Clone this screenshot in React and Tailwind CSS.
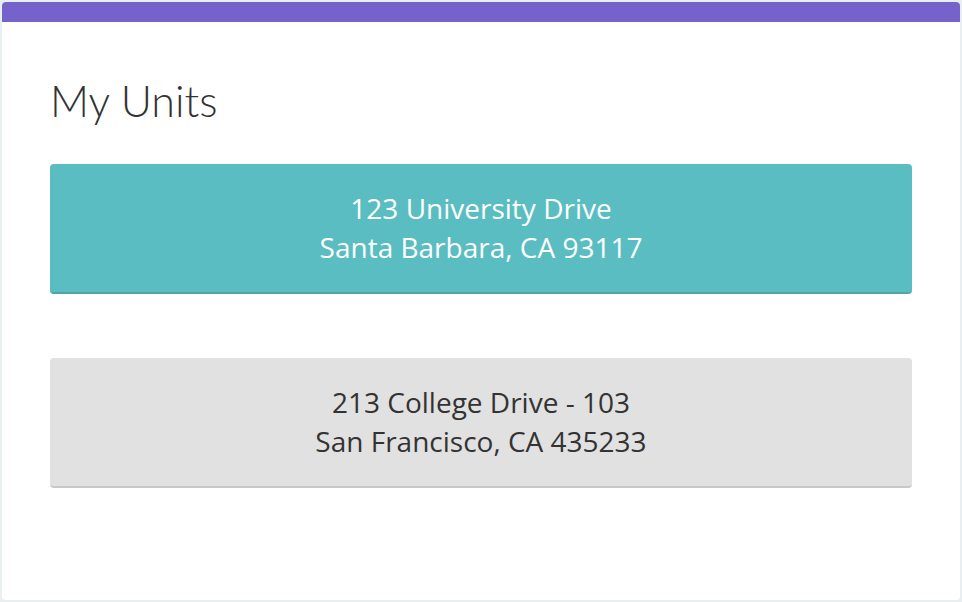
export default function App() {
  const font = { fontFamily: "'Open Sans', Lato, sans-serif" };
  const titleFont = { fontFamily: "Lato, 'Open Sans', sans-serif" };
  return (
    <div className="w-[962px] h-[602px] bg-[#e9eef1] p-[2px] box-border" style={font}>
      <div className="h-full w-[958px] bg-white rounded-[4px] overflow-hidden flex flex-col">
        <div className="h-[20px] bg-[#7562cb] shrink-0" />
        <div className="px-[48px] pt-[51px]">
          <h1 className="text-[43px] leading-[56px] font-light text-[#333]" style={titleFont}>My Units</h1>
          <div className="mt-[35px] flex flex-col gap-[64px]">
            <div className="h-[130px] rounded-[4px] bg-[#5abdc1] border-b-2 border-[#4ea6a9] flex flex-col items-center justify-center text-white text-[28px] leading-[39px] font-medium">
              <div>123 University Drive</div>
              <div>Santa Barbara, CA 93117</div>
            </div>
            <div className="h-[130px] rounded-[4px] bg-[#e1e1e1] border-b-2 border-[#c8c8c8] flex flex-col items-center justify-center text-[#333] text-[28px] leading-[39px] font-medium">
              <div>213 College Drive - 103</div>
              <div>San Francisco, CA 435233</div>
            </div>
          </div>
        </div>
      </div>
    </div>
  );
}
